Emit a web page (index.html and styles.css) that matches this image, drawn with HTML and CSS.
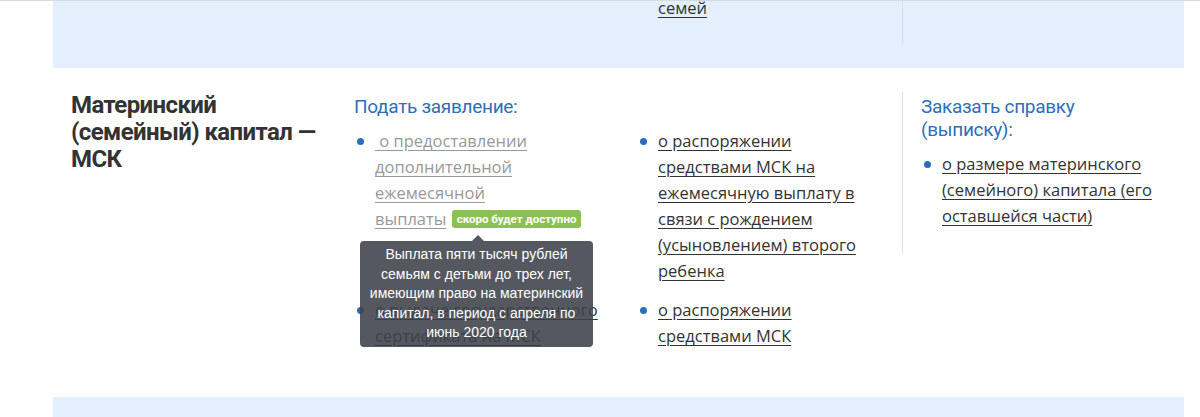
FILE: index.html
```html
<!DOCTYPE html>
<html>
<head>
  <meta charset="utf-8">
  <link rel="stylesheet" href="styles.css">
</head>
<body>
  <div class="top-rule"></div>

  <div class="page">
    <section class="row row-alt row-tail">
      <div class="row-title"></div>
      <div class="row-main">
        <ul class="links">
          <li class="links-tail"></li>
          <li class="links-tail"><a href="#" class="link">семей</a></li>
        </ul>
      </div>
      <div class="row-side row-side-tail"></div>
    </section>

    <section class="row">
      <h2 class="row-title">Материнский (семейный) капитал — МСК</h2>

      <div class="row-main">
        <h3 class="row-head">Подать заявление:</h3>
        <ul class="links">
          <li class="is-off">
            <a href="#" class="link">&nbsp;о предоставлении дополнительной ежемесячной</a>
            <span class="keep"><a href="#" class="link">выплаты</a> <span class="soon">скоро будет доступно</span></span>
            <div class="hint">Выплата пяти тысяч рублей семьям с детьми до трех лет, имеющим право на материнский капитал, в период с апреля по июнь 2020 года</div>
          </li>
          <li><a href="#" class="link">о распоряжении средствами МСК на ежемесячную выплату в связи с рождением (усыновлением) второго ребенка</a></li>
          <li><a href="#" class="link">о выдаче государственного сертификата на МСК</a></li>
          <li><a href="#" class="link">о распоряжении средствами МСК</a></li>
        </ul>
      </div>

      <div class="row-side">
        <h3 class="row-head">Заказать справку (выписку):</h3>
        <ul class="links links-one">
          <li><a href="#" class="link">о размере материнского (семейного) капитала (его оставшейся части)</a></li>
        </ul>
      </div>
    </section>

    <section class="row row-alt row-next"></section>
  </div>
</body>
</html>
```

FILE: styles.css
```css
* {
  margin: 0;
  padding: 0;
  box-sizing: border-box;
}

body {
  background: #fff;
  font-family: "Open Sans", "Noto Sans", sans-serif;
  color: #333;
  overflow: hidden;
}

.top-rule {
  height: 1px;
  background: #d8dce2;
}

.page {
  width: 1131px;
  margin-left: 53px;
}

.row {
  display: grid;
  grid-template-columns: 283px 548px 1fr;
  align-items: start;
  padding: 24px 0 48px 18px;
}

.row-alt {
  background: #e3effd;
}

.row-tail {
  padding-top: 0;
  padding-bottom: 24px;
}

.row-next {
  min-height: 60px;
}

.row-title {
  width: 255px;
  font-family: Roboto, "Liberation Sans", sans-serif;
  font-size: 24px;
  font-weight: 700;
  line-height: 27px;
  letter-spacing: -0.6px;
  color: #333;
}

.row-head {
  padding-top: 3px;
  font-family: Roboto, "Liberation Sans", sans-serif;
  font-size: 19px;
  font-weight: 400;
  line-height: 23px;
  letter-spacing: -0.3px;
  color: #2e6fb7;
}

.row-side {
  border-left: 1px solid #d5e1ee;
  padding: 0 18px 24px 18px;
}

.row-side-tail {
  height: 43px;
  padding: 0;
}

.links {
  list-style: none;
  display: grid;
  grid-template-columns: 283px 1fr;
  row-gap: 13px;
  margin-top: 10px;
}

.links-one {
  grid-template-columns: 1fr;
}

.links li {
  position: relative;
  padding: 0 30px 0 21px;
  font-size: 16.5px;
  line-height: 26px;
}

.links-one li {
  padding-right: 0;
}

.links li::before {
  content: '';
  position: absolute;
  left: 3px;
  top: 10px;
  width: 7px;
  height: 7px;
  border-radius: 50%;
  background: #2a6ebb;
}

.links .links-tail {
  margin-top: -16px;
}

.links .links-tail::before {
  display: none;
}

.link {
  color: #333;
  text-decoration: underline;
  text-underline-offset: 3px;
}

.is-off .link {
  color: #999;
}

.keep {
  white-space: nowrap;
}

.soon {
  display: inline-block;
  margin-left: 1px;
  padding: 0 5px;
  height: 18px;
  border-radius: 3px;
  background: #8cc152;
  color: #fff;
  font-family: Roboto, "Liberation Sans", sans-serif;
  font-size: 11.5px;
  font-weight: 700;
  line-height: 18px;
  vertical-align: 2px;
}

.hint {
  position: absolute;
  left: 6px;
  top: 113px;
  width: 233px;
  padding: 4px 8px;
  border-radius: 4px;
  background: rgba(61, 66, 73, 0.88);
  color: #fff;
  font-family: "Liberation Sans", Arial, sans-serif;
  font-size: 14px;
  line-height: 19.5px;
  text-align: center;
  z-index: 2;
}

.hint::before {
  content: '';
  position: absolute;
  top: -6px;
  left: 112px;
  border: 6px solid transparent;
  border-top: 0;
  border-bottom-color: rgba(61, 66, 73, 0.88);
}
```
